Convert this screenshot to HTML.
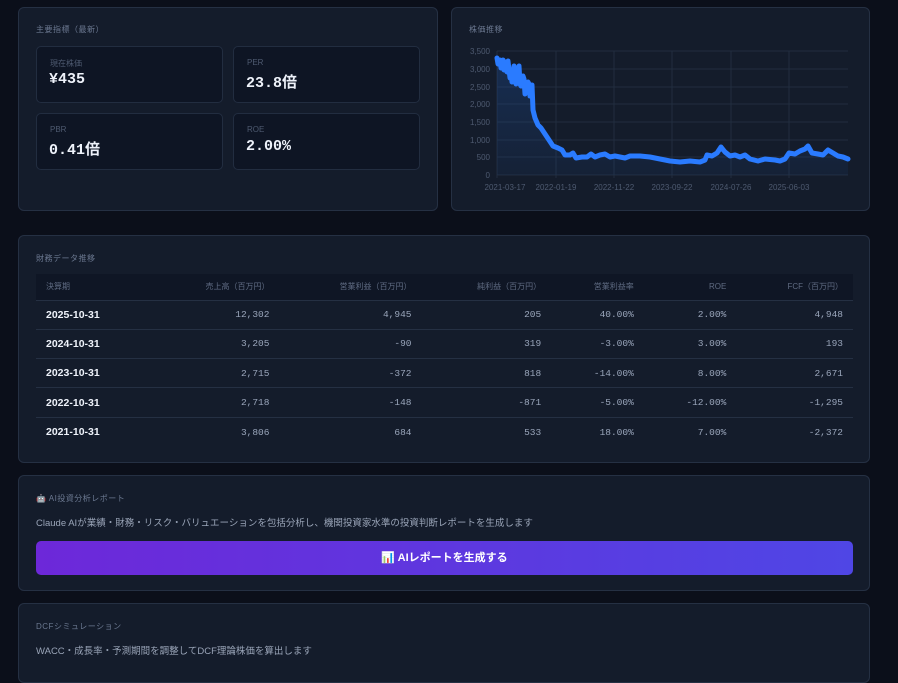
<!DOCTYPE html>
<html><head><meta charset="utf-8"><style>
*{margin:0;padding:0;box-sizing:border-box}
body{width:898px;height:661px;overflow:hidden;background:#0b0f1a;font-family:"Liberation Sans","Noto Sans CJK JP",sans-serif;color:#e6ebf5;position:relative}
.card{position:absolute;background:#141c2b;border:1px solid #253043;border-radius:6px}
.lbl{position:absolute;font-size:8px;color:#6b7890;letter-spacing:.5px}
.m{position:absolute;background:#0e1524;border:1px solid #222d40;border-radius:5px;width:187px;height:57px}
.m .t{position:absolute;left:13px;top:11px;font-size:8px;color:#4e5a70}
.m .v{position:absolute;left:12px;top:24px;font-size:15px;font-weight:700;font-family:"Liberation Mono","Noto Sans CJK JP",monospace;color:#eef2fa}
table{position:absolute;left:17px;top:38px;width:817px;border-collapse:collapse}
th{height:26px;font-size:8px;font-weight:normal;color:#5f6b82;text-align:right;background:#0f1625;padding:0 10px}
td{height:29.3px;border-top:1px solid #253043;text-align:right;font-family:"Liberation Mono",monospace;font-size:9.5px;color:#9aa6bb;padding:0 10px}
td:first-child,th:first-child{text-align:left}
td:first-child{font-family:"Liberation Sans",sans-serif;font-weight:bold;color:#eef2fa;font-size:10.5px}
.desc{position:absolute;left:17px;font-size:9.5px;color:#9aa5b8}
</style></head><body>
<div class="card" style="left:18px;top:7px;width:420px;height:204px">
<div class="lbl" style="left:17px;top:16px">主要指標（最新）</div>
<div class="m" style="left:17px;top:38px"><div class="t">現在株価</div><div class="v">¥435</div></div>
<div class="m" style="left:214px;top:38px"><div class="t">PER</div><div class="v">23.8倍</div></div>
<div class="m" style="left:17px;top:105px"><div class="t">PBR</div><div class="v">0.41倍</div></div>
<div class="m" style="left:214px;top:105px"><div class="t">ROE</div><div class="v">2.00%</div></div>
</div>
<div class="card" style="left:451px;top:7px;width:419px;height:204px">
<div class="lbl" style="left:17px;top:16px">株価推移</div>
</div>
<svg style="position:absolute;left:0;top:0" width="898" height="661">
<g stroke="#222d3f" stroke-width="1">
<line x1="497" y1="51" x2="848" y2="51"/><line x1="497" y1="69" x2="848" y2="69"/><line x1="497" y1="87" x2="848" y2="87"/><line x1="497" y1="104" x2="848" y2="104"/><line x1="497" y1="122" x2="848" y2="122"/><line x1="497" y1="140" x2="848" y2="140"/><line x1="497" y1="157" x2="848" y2="157"/><line x1="497" y1="175" x2="848" y2="175"/>
<line x1="497" y1="51" x2="497" y2="178"/><line x1="556" y1="51" x2="556" y2="178"/><line x1="614" y1="51" x2="614" y2="178"/><line x1="672" y1="51" x2="672" y2="178"/><line x1="731" y1="51" x2="731" y2="178"/><line x1="789" y1="51" x2="789" y2="178"/>
</g>
<g font-size="8" fill="#4e5a70" text-anchor="end" font-family="Liberation Sans">
<text x="490" y="54">3,500</text><text x="490" y="72">3,000</text><text x="490" y="90">2,500</text><text x="490" y="107">2,000</text><text x="490" y="125">1,500</text><text x="490" y="143">1,000</text><text x="490" y="160">500</text><text x="490" y="178">0</text>
</g>
<g font-size="8" fill="#4e5a70" text-anchor="middle" font-family="Liberation Sans">
<text x="505" y="190">2021-03-17</text><text x="556" y="190">2022-01-19</text><text x="614" y="190">2022-11-22</text><text x="672" y="190">2023-09-22</text><text x="731" y="190">2024-07-26</text><text x="789" y="190">2025-06-03</text>
</g>
<defs><linearGradient id="g" x1="0" y1="0" x2="0" y2="1"><stop offset="0" stop-color="#1d4f9a" stop-opacity=".35"/><stop offset="1" stop-color="#1d4f9a" stop-opacity=".1"/></linearGradient></defs>
<polygon fill="url(#g)" points="497,175 497,58 500,66 503,60 506,68 508,61 511,74 514,66 516,82 519,66 521,85 524,79 526,91 529,84 531,96 532,85 533,110 535,118 538,125 541,128 545,134 549,140 553,146 558,148 562,150 565,155 570,155 573,153 576,158 582,157 587,157 591,154 595,157 600,155 605,154 610,157 615,156 620,157 625,158 630,156 640,156 650,157 660,159 670,161 680,162 690,161 700,162 705,160 707,155 712,156 717,153 721,147 725,152 730,156 735,155 740,157 745,155 750,159 758,161 765,159 775,160 780,161 785,159 789,153 795,154 800,151 805,149 808,146 812,153 818,154 823,155 828,150 833,153 838,156 843,157 848,159 848,175"/>
<polyline fill="none" stroke="#2a7bff" stroke-width="5" stroke-linejoin="round" stroke-linecap="round" points="497,58 498,64 500,60 501,68 503,60 504,70 506,62 507,72 508,61 510,78 511,70 512,82 514,66 515,80 516,84 518,72 519,66 520,84 521,86 523,76 524,79 525,94 526,91 528,82 529,84 530,96 531,96 532,85 533,110 535,118 538,125 541,128 545,134 549,140 553,146 558,148 562,150 565,155 570,155 573,153 576,158 582,157 587,157 591,154 595,157 600,155 605,154 610,157 615,156 620,157 625,158 630,156 640,156 650,157 660,159 670,161 680,162 690,161 700,162 705,160 707,155 712,156 717,153 721,147 725,152 730,156 735,155 740,157 745,155 750,159 758,161 765,159 775,160 780,161 785,159 789,153 795,154 800,151 805,149 808,146 812,153 818,154 823,155 828,150 833,153 838,156 843,157 848,159"/>
</svg>
<div class="card" style="left:18px;top:235px;width:852px;height:228px">
<div class="lbl" style="left:17px;top:17px">財務データ推移</div>
<table>
<tr><th>決算期</th><th>売上高（百万円）</th><th>営業利益（百万円）</th><th>純利益（百万円）</th><th>営業利益率</th><th>ROE</th><th>FCF（百万円）</th></tr>
<tr><td>2025-10-31</td><td>12,302</td><td>4,945</td><td>205</td><td>40.00%</td><td>2.00%</td><td>4,948</td></tr>
<tr><td>2024-10-31</td><td>3,205</td><td>-90</td><td>319</td><td>-3.00%</td><td>3.00%</td><td>193</td></tr>
<tr><td>2023-10-31</td><td>2,715</td><td>-372</td><td>818</td><td>-14.00%</td><td>8.00%</td><td>2,671</td></tr>
<tr><td>2022-10-31</td><td>2,718</td><td>-148</td><td>-871</td><td>-5.00%</td><td>-12.00%</td><td>-1,295</td></tr>
<tr><td>2021-10-31</td><td>3,806</td><td>684</td><td>533</td><td>18.00%</td><td>7.00%</td><td>-2,372</td></tr>
</table>
</div>
<div class="card" style="left:18px;top:475px;width:852px;height:116px">
<div class="lbl" style="left:17px;top:17px">🤖 AI投資分析レポート</div>
<div class="desc" style="top:39px">Claude AIが業績・財務・リスク・バリュエーションを包括分析し、機関投資家水準の投資判断レポートを生成します</div>
<div style="position:absolute;left:17px;top:65px;width:817px;height:34px;border-radius:5px;background:linear-gradient(90deg,#6d28d9,#4f46e5);color:#fff;font-weight:bold;font-size:11px;text-align:center;line-height:34px">📊 AIレポートを生成する</div>
</div>
<div class="card" style="left:18px;top:603px;width:852px;height:80px">
<div class="lbl" style="left:17px;top:17px">DCFシミュレーション</div>
<div class="desc" style="top:39px">WACC・成長率・予測期間を調整してDCF理論株価を算出します</div>
</div>
</body></html>
